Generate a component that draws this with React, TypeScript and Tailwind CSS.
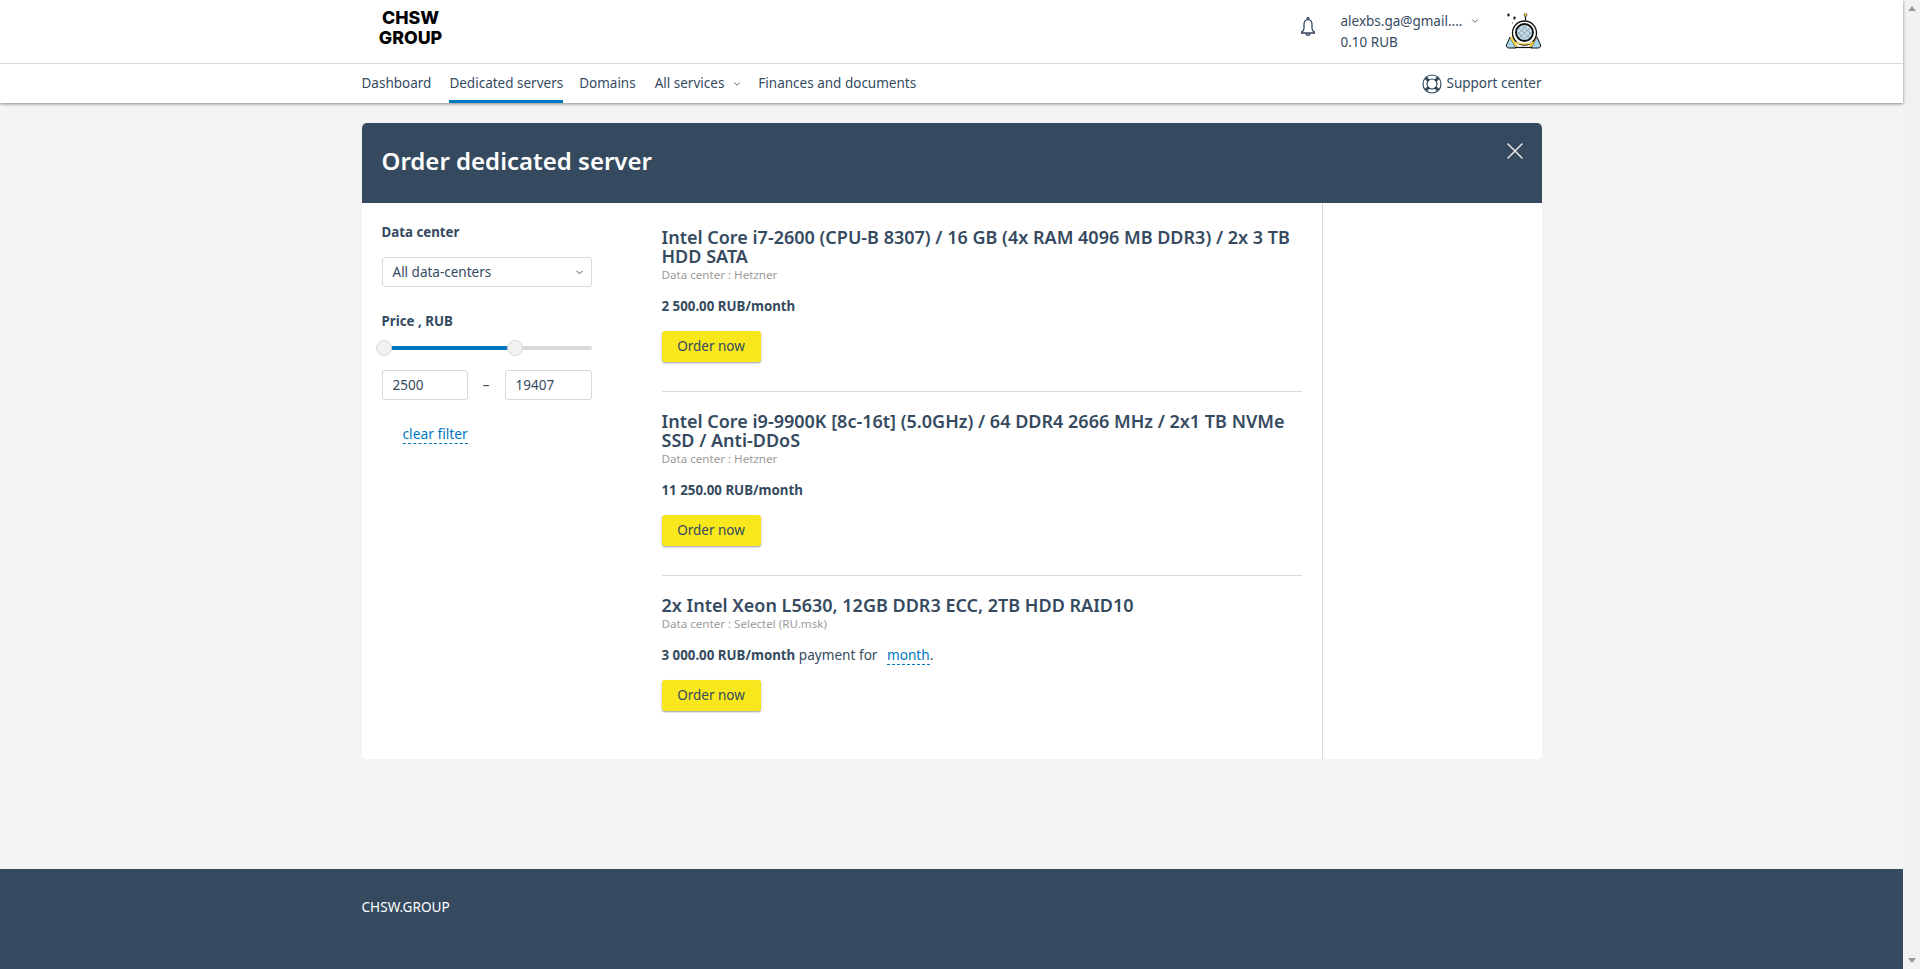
import { ChevronDown, X } from "lucide-react";

const servers = [
  {
    title: "Intel Core i7-2600 (CPU-B 8307) / 16 GB (4x RAM 4096 MB DDR3) / 2x 3 TB HDD SATA",
    dc: "Hetzner",
    price: "2 500.00 RUB/month",
  },
  {
    title: "Intel Core i9-9900K [8c-16t] (5.0GHz) / 64 DDR4 2666 MHz / 2x1 TB NVMe SSD / Anti-DDoS",
    dc: "Hetzner",
    price: "11 250.00 RUB/month",
  },
  {
    title: "2x Intel Xeon L5630, 12GB DDR3 ECC, 2TB HDD RAID10",
    dc: "Selectel (RU.msk)",
    price: "3 000.00 RUB/month",
    term: true,
  },
];

function BellIcon() {
  return (
    <svg viewBox="0 0 14 20" className="h-5 w-3.5" fill="none" stroke="#354a5f" strokeWidth="1.3">
      <circle cx="7" cy="1.6" r="1" />
      <path d="M7 2.6c-2.6 0-4 2-4 4.6v4.3c0 1.6-1 2.6-2.4 3.6v.9h12.8v-.9c-1.4-1-2.4-2-2.4-3.6V7.2c0-2.6-1.4-4.6-4-4.6z" />
      <path d="M5 16c0 1.4.9 2.4 2 2.4s2-1 2-2.4" />
    </svg>
  );
}

function BuoyIcon() {
  return (
    <svg viewBox="0 0 20 20" className="h-5 w-5" fill="none" stroke="#354a5f">
      <circle cx="10" cy="10" r="9" strokeWidth="1.2" />
      <circle cx="10" cy="10" r="5" strokeWidth="1.2" />
      <path d="M3.6 3.6l3 3M16.4 3.6l-3 3M3.6 16.4l3-3M16.4 16.4l-3-3" strokeWidth="3" />
    </svg>
  );
}

function DiverAvatar() {
  return (
    <svg viewBox="0 0 37 37" className="h-[37px] w-[37px]">
      {/* sparkles */}
      <path d="M2 3h3M3.500 1.500v3M8 6h3M9.500 4.500v3" stroke="#111" strokeWidth="1.200" />
      <path d="M7 11h1M9 15h1" stroke="#555" strokeWidth="1" />
      {/* shoulders */}
      <path d="M4 36c-2 0-3-1.500-2.500-3L5 25l6 11H4zM33 36c2 0 3-1.500 2.500-3L32 25l-6 11h7z" fill="#a9d5ea" stroke="#111" strokeWidth="1" />
      <path d="M6 25l6 10M31 25l-6 10" stroke="#f3d54e" strokeWidth="2.500" />
      <path d="M10 35.500h17" stroke="#111" strokeWidth="1.200" />
      {/* helmet */}
      <circle cx="20.500" cy="3" r="1.500" fill="#f0c93a" stroke="#111" strokeWidth=".5" />
      <path d="M20.500 4.500v4" stroke="#111" strokeWidth="1.200" />
      <circle cx="19.500" cy="21" r="12" fill="#fff" stroke="#111" strokeWidth="1.300" />
      <path d="M11 30c3 2.500 14 2.500 17 0" fill="none" stroke="#f3d54e" strokeWidth="1.500" />
      <circle cx="19.500" cy="20.500" r="8.500" fill="#c4e0ec" stroke="#111" strokeWidth="1.800" />
      <path d="M14 16l11 10M12.500 20l7 7M17 13.500l9.500 9M25 16L14 26M26.500 20l-7 7M22 13.500l-9.500 9" stroke="#7b8a94" strokeWidth=".7" />
    </svg>
  );
}

function Arrow({ down }: { down?: boolean }) {
  return (
    <svg viewBox="0 0 8 5" className="h-[5px] w-2" fill="#9a9a9a">
      <path d={down ? "M0 0h8L4 5z" : "M4 0l4 5H0z"} />
    </svg>
  );
}

function Filters() {
  return (
    <div className="w-[210px] shrink-0 pt-[19px]">
      <div className="text-[13.3px] leading-5 font-bold">Data center</div>
      <div className="mt-[15px] flex h-[30px] items-center justify-between rounded-[3px] border border-[#d9d9d9] pr-1.5 pl-2.5 text-[13.5px]">
        <span>All data-centers</span>
        <ChevronDown size={11} strokeWidth={2} />
      </div>
      <div className="mt-[24px] text-[13.3px] leading-5 font-bold">Price , RUB</div>
      <div className="relative mt-[15px] h-1 rounded-full bg-[#d9d9d9]">
        <div className="h-1 w-[133px] rounded-full bg-[#0077c0]" />
        <div className="absolute top-[-6px] left-[-6px] size-4 rounded-full border border-[#d9d9d9] bg-[#f1f1f1]" />
        <div className="absolute top-[-6px] left-[125px] size-4 rounded-full border border-[#d9d9d9] bg-[#f1f1f1]" />
      </div>
      <div className="mt-[20px] flex items-center justify-between text-[13.5px]">
        <div className="flex h-[30px] w-[86px] items-center rounded-[3px] border border-[#d9d9d9] pl-2.5">2500</div>
        <span>–</span>
        <div className="flex h-[30px] w-[87px] items-center rounded-[3px] border border-[#d9d9d9] pl-2.5">19407</div>
      </div>
      <div className="mt-[23px] pl-[21px] leading-5">
        <span className="border-b border-dashed border-[#0077c0] text-[13.8px] text-[#0077c0]">clear filter</span>
      </div>
    </div>
  );
}

function ServerItem({ server, first }: { server: (typeof servers)[number]; first: boolean }) {
  return (
    <div className={first ? "pb-[29px]" : "border-t border-[#d9d9d9] pt-[20px] pb-[29px] last:pb-0"}>
      <h3 className="text-[18px] leading-[19px] font-semibold">{server.title}</h3>
      <div className="mt-px text-[11.6px] leading-[15px] text-[#9b9b9b]">Data center : {server.dc}</div>
      <div className="mt-[14px] text-[13.6px] leading-5">
        <b className="text-[13.3px]">{server.price}</b>
        {server.term && (
          <span>
            {" "}payment for <span className="ml-1.5 border-b border-dashed border-[#0077c0] text-[#0077c0]">month</span>.
          </span>
        )}
      </div>
      <button className="mt-[15px] block h-[31px] w-[99px] rounded-[3px] bg-[#f8e71c] text-[13.5px] shadow-[0_1px_2px_rgba(0,0,0,0.4)]">
        Order now
      </button>
    </div>
  );
}

export default function App() {
  return (
    <div className="flex h-[969px] overflow-hidden bg-[#f4f4f4] font-['Noto_Sans',sans-serif] text-[#354a5f]">
      <div className="flex min-w-0 flex-1 flex-col">
        <header className="relative bg-white shadow-[0_1px_3px_rgba(0,0,0,0.45)]">
          <div className="border-b border-[#d9d9d9]">
            <div className="mx-auto flex h-[63px] w-[1180px] items-center">
              <div className="mb-[7px] ml-[11px] w-[76px] text-center font-['Inter',sans-serif] text-[17.8px] leading-5 font-extrabold text-black">
                CHSW GROUP
              </div>
              <div className="mb-[10px] ml-auto pr-[26px]">
                <BellIcon />
              </div>
              <div className="w-[164px] text-[13.5px] leading-[21px]">
                <div className="flex items-center">
                  <span>alexbs.ga@gmail....</span>
                  <ChevronDown size={10} strokeWidth={2} className="ml-2" />
                </div>
                <div>0.10 RUB</div>
              </div>
              <div className="mb-0.5">
                <DiverAvatar />
              </div>
            </div>
          </div>
          <nav className="mx-auto flex h-[39px] w-[1180px] items-center text-[13.5px]">
            <a className="mr-[18px]">Dashboard</a>
            <a className="mr-4 flex h-full items-center border-b-[3px] border-[#0077c0] pt-[3px]">Dedicated servers</a>
            <a className="mr-[19px]">Domains</a>
            <a className="mr-4 flex items-center gap-2">
              All services <ChevronDown size={10} strokeWidth={2} />
            </a>
            <a>Finances and documents</a>
            <a className="ml-auto flex items-center gap-[5px]">
              <BuoyIcon /> Support center
            </a>
          </nav>
        </header>

        <main className="mx-auto mt-5 w-[1180px]">
          <div className="relative flex h-[80px] items-center rounded-t-[5px] bg-[#354a5f] pb-[5px] pl-5 text-[24px] font-semibold text-white">
            Order dedicated server
            <X size={28} strokeWidth={1.4} className="absolute top-[14px] right-[13px] text-[#e4e4e4]" />
          </div>
          <div className="flex h-[556px] rounded-b-[5px] bg-white pl-5">
            <Filters />
            <div className="ml-[70px] w-[640px] shrink-0 pt-[25px]">
              {servers.map((s, i) => (
                <ServerItem key={s.title} server={s} first={i === 0} />
              ))}
            </div>
            <div className="ml-5 flex-1 border-l border-[#d9d9d9]" />
          </div>
        </main>

        <footer className="mt-auto h-[100px] bg-[#354a5f] pt-7 text-white">
          <div className="mx-auto w-[1180px] text-[13.6px] leading-5">CHSW.GROUP</div>
        </footer>
      </div>

      <aside className="flex w-[17px] shrink-0 flex-col items-center justify-between bg-[#f1f1f1] py-[6px]">
        <Arrow />
        <Arrow down />
      </aside>
    </div>
  );
}
